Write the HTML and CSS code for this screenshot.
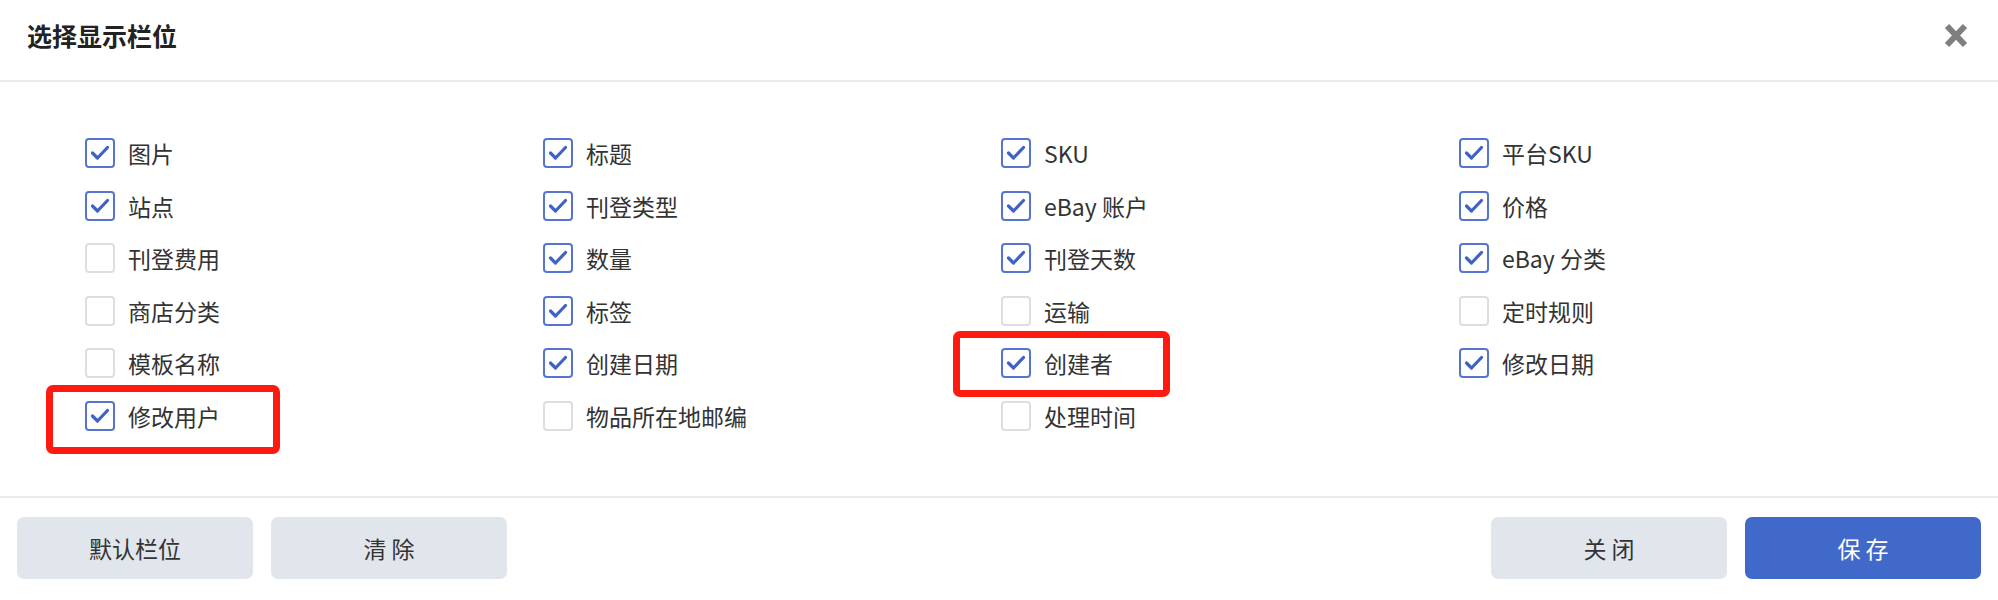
FILE: index.html
```html
<!DOCTYPE html>
<html lang="zh-CN">
  <head>
    <meta charset="utf-8" />
    <title>选择显示栏位</title>
    <link rel="stylesheet" href="styles.css">
  </head>
  <body>
    <div class="dialog">
      <div class="dialog-header">
        <div class="dialog-title">选择显示栏位</div>
        <span class="close-btn">
          <svg width="24" height="25" viewBox="0 0 24 25">
            <line x1="3" y1="3" x2="21" y2="22" stroke="#7f7f7f" stroke-width="6" />
            <line x1="21" y1="3" x2="3" y2="22" stroke="#7f7f7f" stroke-width="6" />
          </svg>
        </span>
      </div>

      <div class="dialog-body">
        <div class="field-grid">
          <label class="field checked"><span class="box"></span>图片</label>
          <label class="field checked"><span class="box"></span>标题</label>
          <label class="field checked"><span class="box"></span>SKU</label>
          <label class="field checked"><span class="box"></span>平台SKU</label>

          <label class="field checked"><span class="box"></span>站点</label>
          <label class="field checked"><span class="box"></span>刊登类型</label>
          <label class="field checked"><span class="box"></span>eBay 账户</label>
          <label class="field checked"><span class="box"></span>价格</label>

          <label class="field"><span class="box"></span>刊登费用</label>
          <label class="field checked"><span class="box"></span>数量</label>
          <label class="field checked"><span class="box"></span>刊登天数</label>
          <label class="field checked"><span class="box"></span>eBay 分类</label>

          <label class="field"><span class="box"></span>商店分类</label>
          <label class="field checked"><span class="box"></span>标签</label>
          <label class="field"><span class="box"></span>运输</label>
          <label class="field"><span class="box"></span>定时规则</label>

          <label class="field"><span class="box"></span>模板名称</label>
          <label class="field checked"><span class="box"></span>创建日期</label>
          <label class="field checked"><span class="box"></span>创建者</label>
          <label class="field checked"><span class="box"></span>修改日期</label>

          <label class="field checked"><span class="box"></span>修改用户</label>
          <label class="field"><span class="box"></span>物品所在地邮编</label>
          <label class="field"><span class="box"></span>处理时间</label>
        </div>
      </div>

      <div class="dialog-footer">
        <div class="btn-group">
          <button class="btn">默认栏位</button>
          <button class="btn">清 除</button>
        </div>
        <div class="btn-group">
          <button class="btn">关 闭</button>
          <button class="btn btn-primary">保 存</button>
        </div>
      </div>
    </div>

    <!-- annotation boxes drawn over the screenshot -->
    <div class="mark mark-user"></div>
    <div class="mark mark-creator"></div>
  </body>
</html>
```

FILE: styles.css
```css
body {
  margin: 0;
  background-color: #fff;
  font-family: "Noto Sans CJK SC", "Noto Sans", sans-serif;
  color: #333;
}
.dialog {
  width: 1998px;
  height: 600px;
  display: flex;
  flex-direction: column;
}
.dialog-header {
  height: 80px;
  border-bottom: 2px solid #ebebeb;
  display: flex;
  align-items: center;
  justify-content: space-between;
  padding: 0 30px 0 27px;
}
.dialog-title {
  font-size: 25px;
  font-weight: bold;
  color: #222;
  margin-top: -10px;
}
.close-btn {
  display: block;
  height: 25px;
  margin-top: -10px;
  cursor: pointer;
}
.dialog-body {
  padding: 45px 81px 0 85px;
  height: 414px;
  box-sizing: border-box;
}
.field-grid {
  display: grid;
  grid-template-columns: repeat(4, 1fr);
  grid-auto-rows: 52.5px;
}
.field {
  display: flex;
  align-items: center;
  font-size: 23px;
  color: #333;
  cursor: pointer;
}
.box {
  width: 30px;
  height: 30px;
  box-sizing: border-box;
  border: 2px solid #dedede;
  border-radius: 4px;
  margin-right: 13px;
  flex-shrink: 0;
  background: #fff;
}
.field.checked .box {
  border-color: #5675d3;
  background: url("data:image/svg+xml,%3Csvg xmlns='http://www.w3.org/2000/svg' width='26' height='26' viewBox='0 0 26 26'%3E%3Cpolyline points='5.5,13 10.5,18 20.5,7.5' fill='none' stroke='%233f62c6' stroke-width='3.2' stroke-linecap='round' stroke-linejoin='round'/%3E%3C/svg%3E") center no-repeat;
}
.dialog-footer {
  border-top: 2px solid #ebebeb;
  display: flex;
  justify-content: space-between;
  padding: 19px 17px 0 17px;
}
.btn-group {
  display: flex;
  gap: 18px;
}
.btn {
  width: 236px;
  height: 62px;
  border: none;
  border-radius: 7px;
  background-color: #e1e5ec;
  color: #333;
  font-family: "Noto Sans CJK SC", sans-serif;
  font-size: 23px;
  cursor: pointer;
}
.btn-primary {
  background-color: #4169c9;
  color: #fff;
}
.mark {
  position: absolute;
  border: 7px solid #ff1a10;
  border-radius: 7px;
  box-sizing: border-box;
}
.mark-user {
  left: 46px;
  top: 385px;
  width: 234px;
  height: 69px;
}
.mark-creator {
  left: 953px;
  top: 331px;
  width: 217px;
  height: 66px;
}
```
